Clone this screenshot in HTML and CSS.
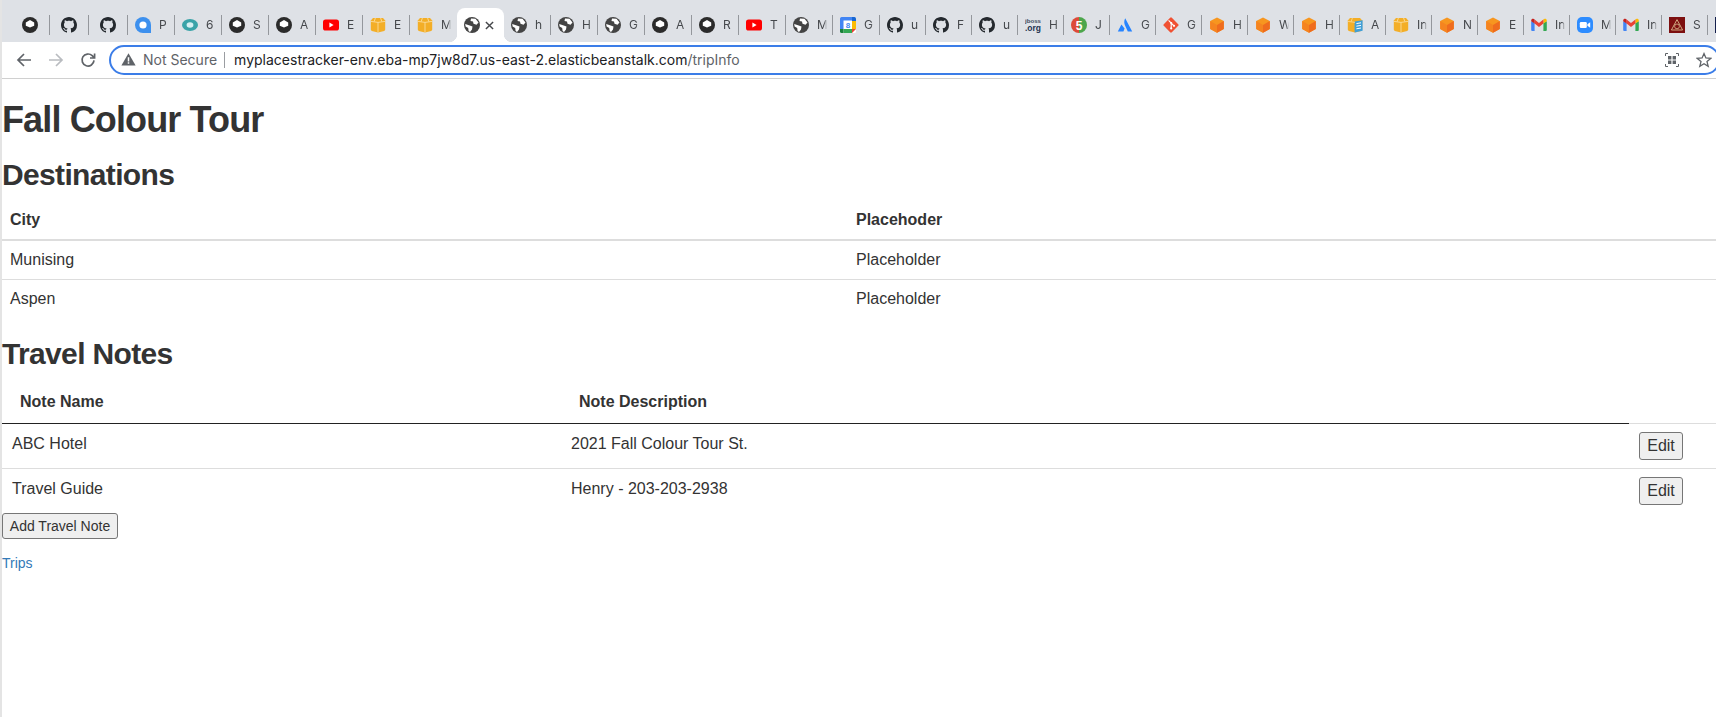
FILE: index.html
```html
<!DOCTYPE html>
<html lang="en">
<head>
  <meta charset="UTF-8" />
  <meta name="viewport" content="width=device-width, initial-scale=1" />
  <title>Trip Info</title>
  <link rel="stylesheet" href="styles.css">
</head>
<body>
  <svg class="icon-defs" aria-hidden="true">
    <symbol id="i-cat" viewBox="0 0 16 16">
      <circle cx="8" cy="8" r="8" fill="#2b2b2b"/>
      <path d="M8 3 12.2 5.4V8.8L8 10.6 3.8 8.8V5.4Z" fill="#fff"/>
    </symbol>
    <symbol id="i-github" viewBox="0 0 16 16">
      <path fill="#24292e" d="M8 0C3.58 0 0 3.58 0 8c0 3.54 2.29 6.53 5.47 7.59.4.07.55-.17.55-.38 0-.19-.01-.82-.01-1.49-2.01.37-2.53-.49-2.69-.94-.09-.23-.48-.94-.82-1.13-.28-.15-.68-.52-.01-.53.63-.01 1.08.58 1.23.82.72 1.21 1.87.87 2.33.66.07-.52.28-.87.51-1.07-1.78-.2-3.64-.89-3.64-3.95 0-.87.31-1.59.82-2.15-.08-.2-.36-1.02.08-2.12 0 0 .67-.21 2.2.82.64-.18 1.32-.27 2-.27.68 0 1.36.09 2 .27 1.53-1.04 2.2-.82 2.2-.82.44 1.1.16 1.92.08 2.12.51.56.82 1.27.82 2.15 0 3.07-1.87 3.75-3.65 3.95.29.25.54.73.54 1.48 0 1.07-.01 1.93-.01 2.2 0 .21.15.46.55.38A8.013 8.013 0 0016 8c0-4.42-3.58-8-8-8z"/>
    </symbol>
    <symbol id="i-globe" viewBox="0 0 16 16">
      <circle cx="8" cy="8" r="8" fill="#444"/>
      <path d="M7 1.5 11.5 1.8 14.5 5.5 12.5 7.8 9.5 6.8 9 4.5 6.5 4Z" fill="#fff"/>
      <path d="M1.2 7 5 8.2 8.5 9.6 8 12.4 6 15 4.6 14 4.2 11 1.6 9.6Z" fill="#fff"/>
    </symbol>
    <symbol id="i-youtube" viewBox="0 0 16 16">
      <rect x="0" y="2.5" width="16" height="11" rx="2.6" fill="#f00"/>
      <path d="M6.4 5.6 10.6 8 6.4 10.4Z" fill="#fff"/>
    </symbol>
    <symbol id="i-box" viewBox="0 0 16 16">
      <path d="M3 1H13L15.2 3.6V12.6Q15.2 13.6 14.2 14L8 15.6 1.8 14Q.8 13.6.8 12.6V3.6Z" fill="#f3ae27"/>
      <path d="M1 4.4 8 5.4 15 4.4M8 5.4V15.4M5.4 1 4.2 4.6M10.6 1 11.8 4.6" stroke="#fbdc9c" stroke-width=".9" fill="none"/>
    </symbol>
    <symbol id="i-boxdoc" viewBox="0 0 16 16">
      <path d="M3 1H13L15.2 3.6V12.6Q15.2 13.6 14.2 14L8 15.6 1.8 14Q.8 13.6.8 12.6V3.6Z" fill="#f3ae27"/>
      <path d="M7.6 4.6 15.6 3.2V13.8L7.6 15.6Z" fill="#3f9fd8"/>
      <path d="M9.4 6.6 14 5.8M9.4 9.2 14 8.4M9.4 11.8 14 11" stroke="#fff" stroke-width="1"/>
      <path d="M1 4.4 8 5.4M5.4 1 4.2 4.6" stroke="#fbdc9c" stroke-width=".8" fill="none"/>
    </symbol>
    <symbol id="i-cube" viewBox="0 0 16 16">
      <path d="M8 .4 14.8 4V12L8 15.8 1.2 12V4Z" fill="#f7961f"/>
      <path d="M8 8 14.8 4V12L8 15.8Z" fill="#ef6c1e"/>
      <path d="M8 8 1.2 4V12L8 15.8Z" fill="#f58420"/>
    </symbol>
    <symbol id="i-p" viewBox="0 0 16 16">
      <path d="M8 0A8 8 0 0 1 16 8V16H8A8 8 0 0 1 8 0Z" fill="#3d90ee"/>
      <circle cx="8" cy="8" r="3.6" fill="#fff"/>
    </symbol>
    <symbol id="i-ring" viewBox="0 0 16 16">
      <ellipse cx="8" cy="8" rx="8" ry="6" fill="#3aa3a8"/>
      <ellipse cx="8" cy="8" rx="3.4" ry="2.8" fill="#d6f0f2"/>
    </symbol>
    <symbol id="i-cal" viewBox="0 0 16 16">
      <rect width="16" height="16" rx="1.5" fill="#fff"/>
      <path d="M0 12V1.5Q0 0 1.5 0H12V3.5H3.5V12Z" fill="#4285f4"/>
      <path d="M12 0H14.5Q16 0 16 1.5V4H12Z" fill="#1967d2"/>
      <path d="M12 4H16V12H12Z" fill="#fbbc04"/>
      <path d="M3.5 12H12V16H3.5Z" fill="#34a853"/>
      <path d="M0 12H3.5V16H1.5Q0 16 0 14.5Z" fill="#188038"/>
      <path d="M12 12H16L12 16Z" fill="#ea4335"/>
      <text x="8" y="11" text-anchor="middle" class="cal-num">8</text>
    </symbol>
    <symbol id="i-jboss" viewBox="0 0 17 16">
      <text x="8.5" y="6" text-anchor="middle" class="jboss-top">jboss</text>
      <text x="8.5" y="14" text-anchor="middle" class="jboss-org">.org</text>
    </symbol>
    <symbol id="i-five" viewBox="0 0 16 16">
      <path d="M8 0A8 8 0 0 0 8 16Z" fill="#dd4b39"/>
      <path d="M8 0A8 8 0 0 1 8 16Z" fill="#4ca64c"/>
      <text x="8" y="12.6" text-anchor="middle" class="five-num">5</text>
    </symbol>
    <symbol id="i-atlassian" viewBox="0 0 16 16">
      <path d="M8.2 1.2C6.8 4 7 6.6 8.4 9.2L10.8 14.4H15.2Z" fill="#2684ff"/>
      <path d="M4.4 7.6 .8 14.4H6.4L7.6 11.6Z" fill="#2684ff"/>
    </symbol>
    <symbol id="i-git" viewBox="0 0 16 16">
      <rect x="2.3" y="2.3" width="11.4" height="11.4" rx="1.2" transform="rotate(45 8 8)" fill="#f05133"/>
      <path d="M5.6 3.4 11 8.8M8.2 6V11.4" stroke="#fff" stroke-width="1.1" fill="none"/>
      <circle cx="8.2" cy="6" r="1.1" fill="#fff"/>
      <circle cx="8.2" cy="11.4" r="1.1" fill="#fff"/>
      <circle cx="11" cy="8.8" r="1.1" fill="#fff"/>
    </symbol>
    <symbol id="i-gmail" viewBox="0 0 16 16">
      <path d="M.2 4.2V13Q.2 14 1.2 14H3.6V6Z" fill="#4285f4"/>
      <path d="M12.4 6V14H14.8Q15.8 14 15.8 13V4.2Z" fill="#34a853"/>
      <path d="M12.4 2.6V6.6L15.8 4.2V3.4C15.8 2 14.2 1.4 13.2 2Z" fill="#fbbc04"/>
      <path d="M3.6 6.6V2.6L8 5.9 12.4 2.6V6.6L8 9.9Z" fill="#ea4335"/>
      <path d="M.2 3.4V4.2L3.6 6.6V2.6L2.8 2C1.8 1.4.2 2 .2 3.4Z" fill="#c5221f"/>
    </symbol>
    <symbol id="i-zoom" viewBox="0 0 16 16">
      <rect width="16" height="16" rx="5" fill="#2d8cff"/>
      <rect x="2.8" y="5" width="7" height="6" rx="1.2" fill="#fff"/>
      <path d="M10.4 7.2 13.2 5.2V10.8L10.4 8.8Z" fill="#fff"/>
    </symbol>
    <symbol id="i-mason" viewBox="0 0 16 16">
      <rect width="16" height="16" fill="#7d0f10"/>
      <path d="M8 2.6 13.6 13H2.4Z" fill="none" stroke="#d9b98c" stroke-width=".9"/>
      <circle cx="8" cy="9.4" r="2.4" fill="none" stroke="#d9b98c" stroke-width=".8"/>
    </symbol>
    <symbol id="i-navy" viewBox="0 0 16 16">
      <rect width="16" height="16" fill="#14204d"/>
    </symbol>
  </svg>

  <div class="window">
    <div class="tabstrip">
      <div class="tab tab-pinned"><svg class="favicon"><use href="#i-cat"/></svg></div>
      <div class="tab tab-pinned"><svg class="favicon"><use href="#i-github"/></svg></div>
      <div class="tab tab-pinned"><svg class="favicon"><use href="#i-github"/></svg></div>
      <div class="tab"><svg class="favicon"><use href="#i-p"/></svg><span class="tab-title">P</span></div>
      <div class="tab"><svg class="favicon"><use href="#i-ring"/></svg><span class="tab-title">6</span></div>
      <div class="tab"><svg class="favicon"><use href="#i-cat"/></svg><span class="tab-title">S</span></div>
      <div class="tab"><svg class="favicon"><use href="#i-cat"/></svg><span class="tab-title">A</span></div>
      <div class="tab"><svg class="favicon"><use href="#i-youtube"/></svg><span class="tab-title">E</span></div>
      <div class="tab"><svg class="favicon"><use href="#i-box"/></svg><span class="tab-title">E</span></div>
      <div class="tab no-sep"><svg class="favicon"><use href="#i-box"/></svg><span class="tab-title">M</span></div>
      <div class="tab tab-active">
        <svg class="favicon"><use href="#i-globe"/></svg>
        <svg class="tab-close" viewBox="0 0 10 10"><path d="M1 1 9 9M9 1 1 9"/></svg>
      </div>
      <div class="tab"><svg class="favicon"><use href="#i-globe"/></svg><span class="tab-title">h</span></div>
      <div class="tab"><svg class="favicon"><use href="#i-globe"/></svg><span class="tab-title">H</span></div>
      <div class="tab"><svg class="favicon"><use href="#i-globe"/></svg><span class="tab-title">G</span></div>
      <div class="tab"><svg class="favicon"><use href="#i-cat"/></svg><span class="tab-title">A</span></div>
      <div class="tab"><svg class="favicon"><use href="#i-cat"/></svg><span class="tab-title">R</span></div>
      <div class="tab"><svg class="favicon"><use href="#i-youtube"/></svg><span class="tab-title">T</span></div>
      <div class="tab"><svg class="favicon"><use href="#i-globe"/></svg><span class="tab-title">M</span></div>
      <div class="tab"><svg class="favicon"><use href="#i-cal"/></svg><span class="tab-title">G</span></div>
      <div class="tab tab-narrow"><svg class="favicon"><use href="#i-github"/></svg><span class="tab-title">u</span></div>
      <div class="tab tab-narrow"><svg class="favicon"><use href="#i-github"/></svg><span class="tab-title">F</span></div>
      <div class="tab tab-narrow"><svg class="favicon"><use href="#i-github"/></svg><span class="tab-title">u</span></div>
      <div class="tab tab-narrow"><svg class="favicon favicon-wide"><use href="#i-jboss"/></svg><span class="tab-title">H</span></div>
      <div class="tab tab-narrow"><svg class="favicon"><use href="#i-five"/></svg><span class="tab-title">J</span></div>
      <div class="tab tab-narrow"><svg class="favicon"><use href="#i-atlassian"/></svg><span class="tab-title">G</span></div>
      <div class="tab tab-narrow"><svg class="favicon"><use href="#i-git"/></svg><span class="tab-title">G</span></div>
      <div class="tab tab-narrow"><svg class="favicon"><use href="#i-cube"/></svg><span class="tab-title">H</span></div>
      <div class="tab tab-narrow"><svg class="favicon"><use href="#i-cube"/></svg><span class="tab-title">W</span></div>
      <div class="tab tab-narrow"><svg class="favicon"><use href="#i-cube"/></svg><span class="tab-title">H</span></div>
      <div class="tab tab-narrow"><svg class="favicon"><use href="#i-boxdoc"/></svg><span class="tab-title">A</span></div>
      <div class="tab tab-narrow"><svg class="favicon"><use href="#i-box"/></svg><span class="tab-title">In</span></div>
      <div class="tab tab-narrow"><svg class="favicon"><use href="#i-cube"/></svg><span class="tab-title">N</span></div>
      <div class="tab tab-narrow"><svg class="favicon"><use href="#i-cube"/></svg><span class="tab-title">E</span></div>
      <div class="tab tab-narrow"><svg class="favicon"><use href="#i-gmail"/></svg><span class="tab-title">In</span></div>
      <div class="tab tab-narrow"><svg class="favicon"><use href="#i-zoom"/></svg><span class="tab-title">M</span></div>
      <div class="tab tab-narrow"><svg class="favicon"><use href="#i-gmail"/></svg><span class="tab-title">In</span></div>
      <div class="tab tab-narrow"><svg class="favicon"><use href="#i-mason"/></svg><span class="tab-title">S</span></div>
      <div class="tab tab-narrow"><svg class="favicon"><use href="#i-navy"/></svg></div>
    </div>

    <div class="toolbar">
      <svg class="nav-icon" viewBox="0 0 16 16"><path d="M15 8H2M8 2 2 8 8 14"/></svg>
      <svg class="nav-icon nav-disabled" viewBox="0 0 16 16"><path d="M1 8H14M8 2 14 8 8 14"/></svg>
      <svg class="nav-icon" viewBox="0 0 16 16"><path d="M14 8.4A6 6 0 1 1 12.2 3.7L14.4 5.8M14.6 1.4V6H10"/></svg>
      <div class="omnibox">
        <svg class="warn-icon" viewBox="0 0 16 16"><path d="M8 1.2 15.6 14.4H.4Z" fill="#5f6368"/><path d="M7.2 5.6H8.8V10.2H7.2ZM7.2 11H8.8V12.6H7.2Z" fill="#fff"/></svg>
        <span class="not-secure">Not Secure</span>
        <span class="omni-sep"></span>
        <span class="url">myplacestracker-env.eba-mp7jw8d7.us-east-2.elasticbeanstalk.com<span class="url-path">/tripInfo</span></span>
        <svg class="qr-icon" viewBox="0 0 14 14"><path d="M.5 3V.5H3M11 .5H13.5V3M13.5 11V13.5H11M3 13.5H.5V11" fill="none" stroke="#5f6368"/><path d="M3 3H6.4V6.4H3ZM7.6 3H11V6.4H7.6ZM3 7.6H6.4V11H3ZM7.6 7.6H11V11H7.6Z" fill="#5f6368"/></svg>
        <svg class="star-icon" viewBox="0 0 16 16"><path d="M8 1.6 9.9 6 14.7 6.4 11 9.6 12.2 14.3 8 11.8 3.8 14.3 5 9.6 1.3 6.4 6.1 6Z"/></svg>
      </div>
    </div>

    <main class="page">
      <h1>Fall Colour Tour</h1>

      <h2>Destinations</h2>
      <table class="table">
        <colgroup><col class="col-city"><col></colgroup>
        <thead>
          <tr><th>City</th><th>Placehoder</th></tr>
        </thead>
        <tbody>
          <tr><td>Munising</td><td>Placeholder</td></tr>
          <tr><td>Aspen</td><td>Placeholder</td></tr>
        </tbody>
      </table>

      <h2>Travel Notes</h2>
      <table class="table notes-table">
        <colgroup><col class="col-name"><col class="col-desc"><col></colgroup>
        <thead>
          <tr><th>Note Name</th><th>Note Description</th></tr>
        </thead>
        <tbody>
          <tr><td>ABC Hotel</td><td>2021 Fall Colour Tour St.</td><td class="cell-action"><button class="btn-edit" type="button">Edit</button></td></tr>
          <tr><td>Travel Guide</td><td>Henry - 203-203-2938</td><td class="cell-action"><button class="btn-edit" type="button">Edit</button></td></tr>
        </tbody>
      </table>
      <button class="btn-add" type="button">Add Travel Note</button>

      <p class="back-link"><a href="#">Trips</a></p>
    </main>
  </div>
</body>
</html>
```

FILE: styles.css
```css
* {
  box-sizing: border-box;
}
html, body {
  margin: 0;
  height: 100%;
}
body {
  padding-left: 2px;
  background: #e4e4e4;
  font-family: "Liberation Sans", Arial, sans-serif;
  font-size: 16px;
  line-height: 22px;
  color: #333;
  overflow: hidden;
}
.icon-defs {
  display: none;
}

/* Browser chrome */
.window {
  min-height: 100%;
  background: #fff;
}
.tabstrip {
  display: flex;
  align-items: center;
  height: 42px;
  padding: 8px 0 0 8.5px;
  background: #dee1e6;
  overflow: hidden;
}
.tab {
  flex: none;
  display: flex;
  align-items: center;
  gap: 8px;
  width: 47px;
  height: 20px;
  padding-left: 7.5px;
  border-right: 1px solid #94979c;
}
.tab-pinned {
  width: 39px;
  padding-left: 11.5px;
}
.tab-narrow {
  width: 46px;
}
.no-sep {
  border-right-color: transparent;
}
.tab-active {
  position: relative;
  align-self: stretch;
  height: 34px;
  border-right: none;
  border-radius: 8px 8px 0 0;
  background: #fff;
  gap: 5px;
}
.tab-active::before,
.tab-active::after {
  content: "";
  position: absolute;
  bottom: 0;
  width: 8px;
  height: 8px;
}
.tab-active::before {
  left: -8px;
  background: radial-gradient(circle at 0 0, transparent 8px, #fff 8.5px);
}
.tab-active::after {
  right: -8px;
  background: radial-gradient(circle at 100% 0, transparent 8px, #fff 8.5px);
}
.tab-close {
  width: 9px;
  height: 9px;
  fill: none;
  stroke: #45474a;
  stroke-width: 1.6;
}
.favicon {
  flex: none;
  width: 16px;
  height: 16px;
}
.favicon-wide {
  overflow: visible;
}
.tab-title {
  width: 10px;
  overflow: hidden;
  font-family: Inter, "Liberation Sans", sans-serif;
  font-size: 12px;
  line-height: 16px;
  color: #45484c;
  -webkit-mask-image: linear-gradient(to right, #000 70%, transparent);
  mask-image: linear-gradient(to right, #000 70%, transparent);
}
.cal-num {
  font: bold 8px "Liberation Sans", sans-serif;
  fill: #4285f4;
}
.jboss-top {
  font: bold 6.5px "Liberation Sans", sans-serif;
  fill: #3b4a5c;
}
.jboss-org {
  font: bold 9px "Liberation Sans", sans-serif;
  fill: #1d3350;
}
.five-num {
  font: bold 12px "Liberation Sans", sans-serif;
  fill: #fff;
}
.toolbar {
  display: flex;
  align-items: center;
  gap: 16px;
  height: 37px;
  padding-left: 14px;
  padding-bottom: 1px;
  border-bottom: 1px solid #d0d0d0;
  background: #fff;
}
.nav-icon {
  flex: none;
  width: 16px;
  height: 16px;
  fill: none;
  stroke: #5f6368;
  stroke-width: 1.7;
}
.nav-disabled {
  stroke: #b9bcc0;
}
.omnibox {
  flex: 1;
  display: flex;
  align-items: center;
  height: 30px;
  margin-left: -3px;
  margin-right: -4px;
  padding: 0 6px 0 10px;
  border: 2px solid #3b7de8;
  border-radius: 15px;
  font-family: Inter, "Liberation Sans", sans-serif;
  font-size: 14px;
}
.warn-icon {
  flex: none;
  width: 15px;
  height: 15px;
}
.not-secure {
  margin-left: 7px;
  color: #5f6368;
}
.omni-sep {
  width: 1px;
  height: 16px;
  margin: 0 9px 0 7px;
  background: #9a9da1;
}
.url {
  flex: 1;
  color: #202124;
}
.url-path {
  color: #5f6368;
}
.qr-icon {
  flex: none;
  width: 14px;
  height: 14px;
  margin-right: 17px;
}
.star-icon {
  flex: none;
  width: 16px;
  height: 16px;
  fill: none;
  stroke: #5f6368;
  stroke-width: 1.3;
}

/* Page content */
h1, h2 {
  font-weight: 700;
  line-height: 1.1;
}
h1 {
  margin: 21px 0 18px;
  font-size: 36px;
  letter-spacing: -0.87px;
}
h2 {
  margin: 0 0 10px;
  font-size: 30px;
  letter-spacing: -0.65px;
}
.table {
  width: 100%;
  margin-bottom: 19px;
  border-collapse: collapse;
  table-layout: fixed;
}
.table th,
.table td {
  padding: 8px;
  text-align: left;
  vertical-align: top;
}
.table th {
  border-bottom: 2px solid #ddd;
}
.table td {
  border-top: 1px solid #ddd;
}
.col-city {
  width: 846px;
}
.notes-table {
  margin-top: 11px;
  margin-bottom: 0;
}
.notes-table th {
  padding: 10px 18px;
  border-bottom: 1px solid #222;
}
.notes-table td {
  padding: 9px 10px 8px;
}
.notes-table .cell-action {
  padding-top: 8px;
}
.col-name {
  width: 559px;
}
.col-desc {
  width: 1068px;
}
button {
  display: block;
  border: 1px solid #767676;
  border-radius: 3px;
  background: #efefef;
  font-family: "Liberation Sans", Arial, sans-serif;
  color: #333;
}
.btn-edit {
  width: 44px;
  height: 28px;
  padding: 0;
  font-size: 16px;
}
.btn-add {
  width: 116px;
  height: 26px;
  padding: 0;
  font-size: 14px;
}
.back-link {
  margin: 14px 0 0;
  font-size: 14px;
  line-height: 20px;
}
.back-link a {
  color: #337ab7;
  text-decoration: none;
}
```
